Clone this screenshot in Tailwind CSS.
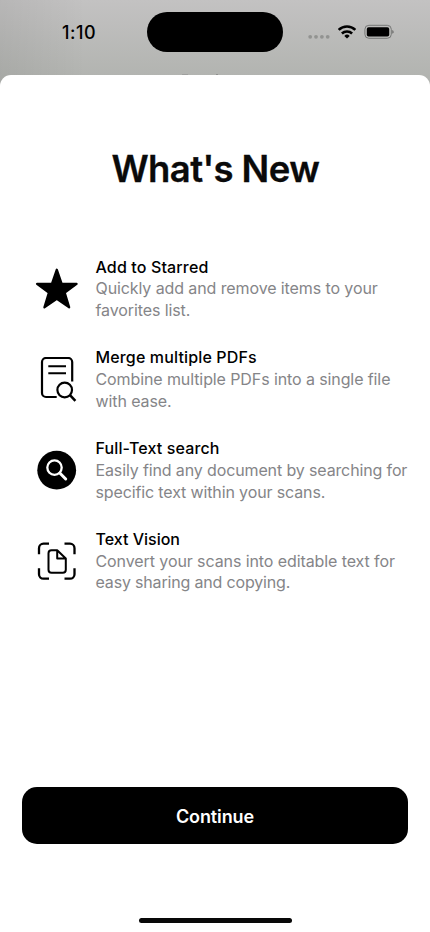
<!DOCTYPE html>
<html lang="en">
<head>
<meta charset="utf-8">
<meta name="viewport" content="width=device-width, initial-scale=1">
<title>What's New</title>
<script src="https://cdn.jsdelivr.net/npm/@tailwindcss/browser@4"></script>
</head>
<body class="font-[Inter,sans-serif] text-black">
<div class="relative flex h-[932px] w-[430px] flex-col overflow-hidden bg-linear-to-b from-[#c3c2c2] to-[#b0b2ae] to-[86px]">
  <div class="absolute inset-x-0 top-0 h-[86px] bg-linear-to-r from-black/6 via-transparent via-20% to-transparent"></div>
  <header class="relative flex h-[75px] shrink-0 items-start">
    <div class="flex w-[147px] justify-center pt-[23px] pl-[11px] text-[18px] leading-5 font-medium"><span class="tracking-[0.5px]">1:10</span></div>
    <div class="mt-[12.400px] h-10 w-[136px] rounded-full bg-black"></div>
    <div class="flex flex-1 pt-[24px] pl-[25px]">
      <svg class="mt-[10px] h-[5px] w-[22px] shrink-0" viewBox="0 0 22 5" fill="#929391"><circle cx="2.2" cy="2.8" r="1.9"/><circle cx="8" cy="2.8" r="1.9"/><circle cx="13.9" cy="2.8" r="1.9"/><circle cx="19.7" cy="2.8" r="1.9"/></svg>
      <svg class="ml-2 h-[15px] w-[18px] shrink-0" viewBox="0 0 18 15" fill="none" stroke="#000" stroke-width="2.5"><path d="M.7 5.900a11.800 11.800 0 0 1 16.600 0"/><path d="M3.900 9.500a7.200 7.200 0 0 1 10.200 0"/><path d="M9 14.600 6.300 11.900a3.900 3.900 0 0 1 5.400 0z" fill="#000" stroke="none"/></svg>
      <svg class="ml-2 h-[16px] w-[32px] shrink-0" viewBox="0 0 32 16"><rect x="0.900" y="1.300" width="26.400" height="13" rx="4" fill="none" stroke="#767776"/><rect x="2.800" y="3.200" width="22.400" height="9.300" rx="1.800"/><path d="M28.500 5.900c1.300.7 1.300 3.200 0 3.900z" fill="#444"/></svg>
    </div>
    <div class="absolute top-[74px] left-[182px] h-px w-1.5 bg-[#9fa09e]"></div>
    <div class="absolute top-[74px] left-[216px] h-px w-[2px] bg-[#90918f]"></div>
  </header>
  <main class="relative flex flex-1 flex-col rounded-t-[11px] bg-white">
    <h1 class="mt-[72px] text-center text-[36.500px] leading-[44px] font-semibold text-[#0a0a0a]"><span class="-mr-[0.6px] tracking-[-0.6px] [-webkit-text-stroke:0.3px_#0a0a0a]">What's New</span></h1>
    <section class="mt-[65.500px] flex flex-col gap-[25.400px] pl-[33.500px] text-[16px] leading-[21.800px] text-[#858588]">
      <article class="flex">
        <svg class="mt-[10px] mr-[16px] h-[46px] w-[46px] shrink-0" viewBox="34 267 46 46"><path d="M56.800 269.700 61.700 283.900H76.600L64.800 292.700 69.200 307.400 56.800 298.800 44.400 307.400 48.800 292.700 37 283.900H51.900Z" stroke="#000" stroke-width="2.2" stroke-linejoin="round"/></svg>
        <div><h2 class="font-medium tracking-[0.14px] text-black">Add to Starred</h2><p class="tracking-[-0.1px]">Quickly add and remove items to your<br>favorites list.</p></div>
      </article>
      <article class="flex">
        <svg class="mt-[10px] mr-[16px] h-[46px] w-[46px] shrink-0" viewBox="34 357 46 46" fill="none" stroke="#000" stroke-width="2.2"><path d="M56.700 397H46a4 4 0 0 1-4-4V362a4 4 0 0 1 4-4H68.200a4 4 0 0 1 4 4V381.500"/><path d="M48.300 366.200H66M48.300 373.300H66" stroke-width="1.9"/><circle cx="64.700" cy="390" r="7.300"/><path d="m70 395.200 5.400 5.700" stroke-width="2.6"/></svg>
        <div><h2 class="font-medium tracking-[0.15px] text-black">Merge multiple PDFs</h2><p class="tracking-[-0.1px]">Combine multiple PDFs into a single file<br>with ease.</p></div>
      </article>
      <article class="flex">
        <svg class="mt-[10px] mr-[16px] h-[46px] w-[46px] shrink-0" viewBox="34 448 46 46" fill="none" stroke="#fff"><circle cx="56.700" cy="470.200" r="19.400" fill="#000" stroke="none"/><circle cx="54.500" cy="467.600" r="7.200" stroke-width="2.3"/><path d="m59.800 473 5.900 6" stroke-width="3" stroke-linecap="round"/></svg>
        <div><h2 class="font-medium tracking-[0.13px] text-black">Full-Text search</h2><p class="tracking-[-0.13px]">Easily find any document by searching for<br>specific text within your scans.</p></div>
      </article>
      <article class="flex">
        <svg class="mt-[10px] mr-[16px] h-[46px] w-[46px] shrink-0" viewBox="34 538.8 46 46" fill="none" stroke="#000" stroke-width="2.3" stroke-linejoin="round"><path d="M39 554V548a4.500 4.500 0 0 1 4.500-4.500H49M64.500 543.500H70a4.500 4.500 0 0 1 4.500 4.500V554M74.500 568V574a4.500 4.500 0 0 1-4.500 4.500H64.500M49 578.500H43.500A4.500 4.500 0 0 1 39 574V568"/><path d="M51.500 550H57.200L65.800 558.300V569.500a3 3 0 0 1-3 3H51.500a3 3 0 0 1-3-3V553a3 3 0 0 1 3-3ZM57.200 550V558.300H65.800" stroke-width="2"/></svg>
        <div><h2 class="font-medium text-black">Text Vision</h2><p class="tracking-[-0.09px]">Convert your scans into editable text for<br><span class="tracking-[-0.17px]">easy sharing and copying.</span></p></div>
      </article>
    </section>
    <button class="mx-[22px] mt-auto h-[57px] rounded-[15px] bg-black pt-[2px] text-[18px] font-semibold text-white"><span class="tracking-[-0.1px]">Continue</span></button>
    <div class="mx-auto mt-[74px] mb-[9px] h-[5px] w-[153px] rounded-full bg-[#080808]"></div>
  </main>
</div>
</body>
</html>
